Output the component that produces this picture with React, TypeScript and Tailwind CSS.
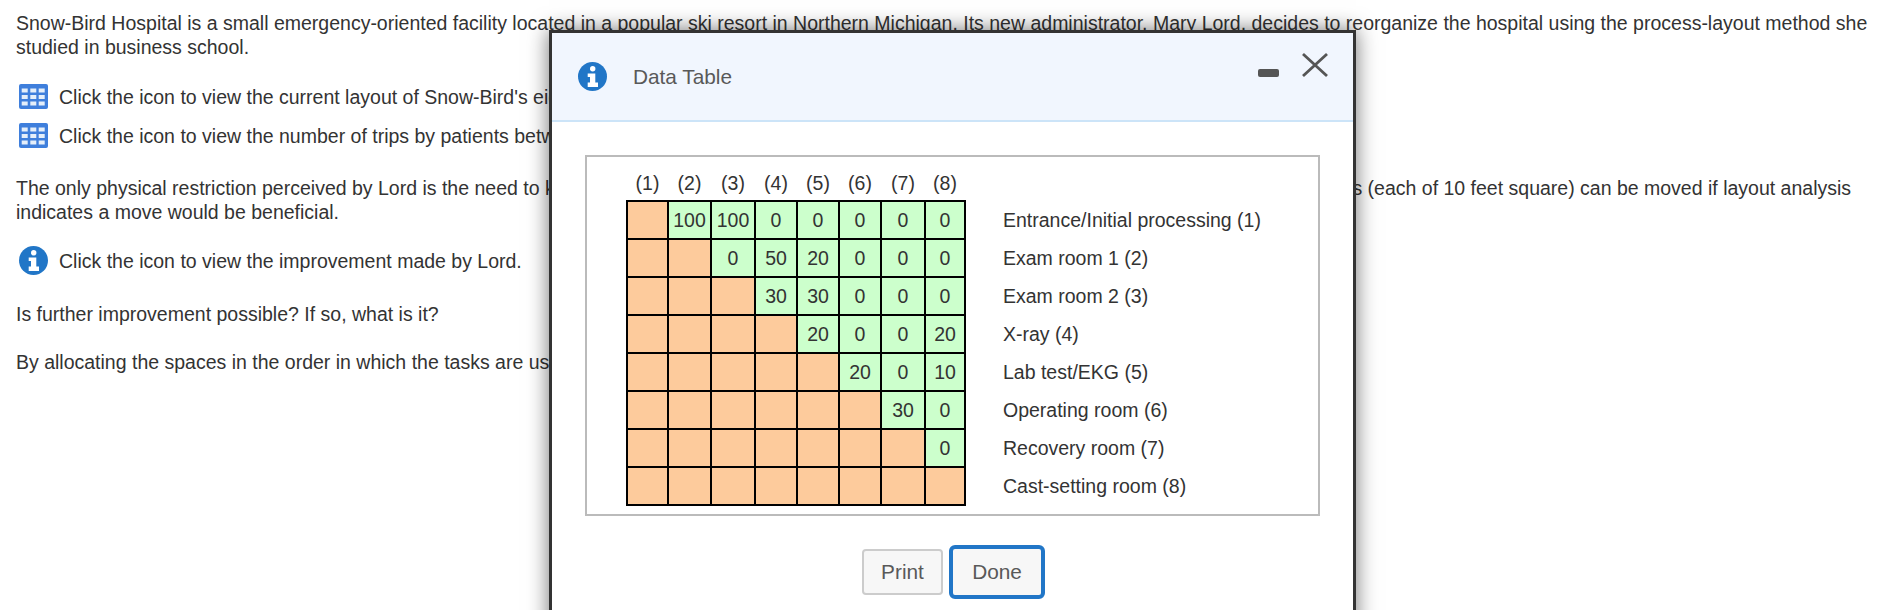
const rows: (string | null)[][] = [
  [null, "100", "100", "0", "0", "0", "0", "0"],
  [null, null, "0", "50", "20", "0", "0", "0"],
  [null, null, null, "30", "30", "0", "0", "0"],
  [null, null, null, null, "20", "0", "0", "20"],
  [null, null, null, null, null, "20", "0", "10"],
  [null, null, null, null, null, null, "30", "0"],
  [null, null, null, null, null, null, null, "0"],
  [null, null, null, null, null, null, null, null],
];
const labels = [
  "Entrance/Initial processing (1)",
  "Exam room 1 (2)",
  "Exam room 2 (3)",
  "X-ray (4)",
  "Lab test/EKG (5)",
  "Operating room (6)",
  "Recovery room (7)",
  "Cast-setting room (8)",
];
const widths = ["w-[41px]", "w-[43px]", "w-[44px]", "w-[42px]", "w-[42px]", "w-[42px]", "w-[44px]", "w-[40px]"];

function TableIcon() {
  return (
    <svg width="29" height="25" viewBox="0 0 29 25" className="shrink-0">
      <rect x="0" y="0" width="29" height="25" rx="2" fill="#3f7fdc" />
      {[2.7, 11.3, 19.7].map((x) =>
        [4.5, 11, 17.5].map((y) => (
          <rect key={`${x}-${y}`} x={x} y={y} width="6" height="4" fill="#e5effa" />
        )),
      )}
    </svg>
  );
}

function InfoIcon() {
  return (
    <svg width="29" height="29" viewBox="0 0 29 29" className="shrink-0">
      <circle cx="14.5" cy="14.5" r="14.5" fill="#2176c7" />
      <circle cx="14.7" cy="6.8" r="2.7" fill="#fff" />
      <path d="M9.7 11.5h7.6v9h2.7v4.5H9.7v-4.5h2.3v-5.5H9.7z" fill="#fff" />
    </svg>
  );
}

export default function App() {
  return (
    <div className="relative h-[610px] w-[1890px] overflow-hidden bg-white font-['Liberation_Sans',Arial,sans-serif] text-[19.5px] leading-[24px] text-[#333]">
      <div className="pl-4 pt-[11px]">
        <p className="whitespace-nowrap">
          Snow-Bird Hospital is a small emergency-oriented facility located in a popular ski resort in Northern Michigan. Its new administrator, Mary Lord, decides to reorganize the hospital using the process-layout method she
          <br />
          studied in business school.
        </p>
        <div className="mt-[25px] flex h-[25px] items-center gap-[11px] pl-[3px]">
          <TableIcon />
          <span className="whitespace-nowrap">Click the icon to view the current layout of Snow-Bird's eight departments.</span>
        </div>
        <div className="mt-[14px] flex h-[25px] items-center gap-[11px] pl-[3px]">
          <TableIcon />
          <span className="whitespace-nowrap">Click the icon to view the number of trips by patients between departments.</span>
        </div>
        <p className="mt-[28px] whitespace-nowrap">
          The only physical restriction perceived by Lord is the need to keep the entrance/initial processing room in its current location. All other departments or rooms (each of 10 feet square) can be moved if layout analysis
          <br />
          indicates a move would be beneficial.
        </p>
        <div className="mt-[22px] flex h-[29px] items-center gap-[11px] pl-[3px]">
          <InfoIcon />
          <span className="whitespace-nowrap">Click the icon to view the improvement made by Lord.</span>
        </div>
        <p className="mt-[27px]">Is further improvement possible? If so, what is it?</p>
        <p className="mt-[24px] whitespace-nowrap">By allocating the spaces in the order in which the tasks are used, the layout can be improved.</p>
      </div>

      <div className="absolute left-[549px] top-[30px] h-[640px] w-[807px] border-[3px] border-[#333] bg-white shadow-[0_0_20px_rgba(0,0,0,0.55)]">
        <div className="relative flex h-[89px] items-center border-b-2 border-[#cce4f8] bg-[#f1f6fe] pl-[26px] text-[#595959]">
          <InfoIcon />
          <span className="ml-[26px] text-[20.8px]">Data Table</span>
          <div className="absolute left-[706px] top-[36px] h-[8px] w-[21px] rounded-[2px] bg-[#555]" />
          <svg width="28" height="26" viewBox="0 0 28 26" className="absolute left-[749px] top-[19px]">
            <path d="M2 2 L26 24 M26 2 L2 24" stroke="#555" strokeWidth="2.8" fill="none" />
          </svg>
        </div>
        <div className="ml-[33px] mt-[33px] h-[361px] w-[735px] border-2 border-[#bbb] pl-[39px] pt-[10px]">
          <table className="border-collapse text-center">
            <thead>
              <tr className="h-[34px]">
                {widths.map((w, i) => (
                  <th key={i} className={`${w} p-0 pb-[2px] font-normal`}>({i + 1})</th>
                ))}
                <th className="w-0 p-0" />
              </tr>
            </thead>
            <tbody>
              {rows.map((row, r) => (
                <tr key={r} className="h-[38px]">
                  {row.map((v, c) => (
                    <td key={c} className={`border-2 border-black p-0 ${v === null ? "bg-[#fdcb9c]" : "bg-[#ccffcc]"}`}>{v}</td>
                  ))}
                  <td className="whitespace-nowrap p-0 pl-[37px] text-left">{labels[r]}</td>
                </tr>
              ))}
            </tbody>
          </table>
        </div>
        <div className="ml-[2px] mt-[29px] flex items-center justify-center gap-[6px]">
          <button className="h-[46px] w-[81px] rounded-[4px] border-2 border-[#ccc] bg-[#f7f7f7] text-[20.8px] text-[#595959]">Print</button>
          <button className="h-[54px] w-[96px] rounded-[6px] border-[4px] border-[#2176c7] bg-[#f7f7f7] text-[20.8px] text-[#595959]">Done</button>
        </div>
      </div>
    </div>
  );
}
